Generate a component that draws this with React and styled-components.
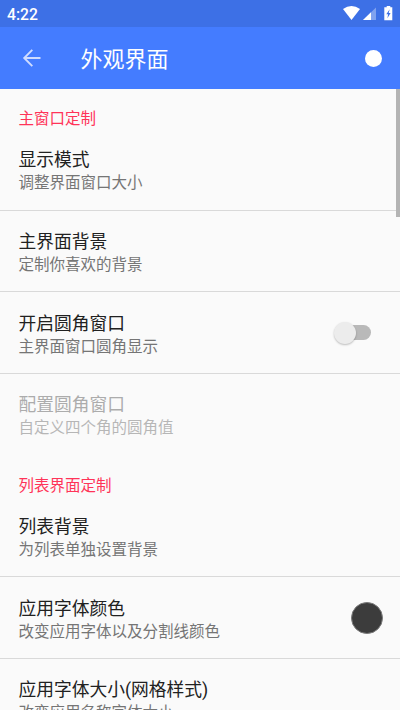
import React from "react";
import styled, { createGlobalStyle } from "styled-components";

const GlobalStyle = createGlobalStyle`
  * { box-sizing: border-box; }
  html, body { margin: 0; padding: 0; overflow: hidden; }
  body {
    background: #fafafa;
    font-family: Roboto, "Noto Sans CJK SC", sans-serif;
  }
`;

const Screen = styled.div`
  display: flex;
  flex-direction: column;
  width: 400px;
  height: 710px;
  overflow: hidden;
  background: #fafafa;
`;

const StatusBar = styled.header`
  display: flex;
  align-items: center;
  justify-content: space-between;
  flex: none;
  height: 27px;
  padding: 0 7px;
  background: #3d70e6;
  color: #fff;
`;

const Clock = styled.span`
  font-size: 15.7px;
  font-weight: 500;
  line-height: 27px;
  padding-top: 2px;
`;

const StatusIcons = styled.svg`
  display: block;
  width: 52px;
  height: 27px;
`;

const AppBar = styled.div`
  display: flex;
  align-items: center;
  flex: none;
  height: 62px;
  padding: 0 18px 0 20px;
  background: #447cff;
  color: #fff;
`;

const BackIcon = styled.svg`
  display: block;
  flex: none;
  width: 24px;
  height: 24px;
`;

const Title = styled.h1`
  flex: 1;
  margin: 0 0 0 36.5px;
  padding-top: 3px;
  font-size: 22px;
  font-weight: 400;
  line-height: 30px;
`;

const ColorDot = styled.span`
  flex: none;
  width: ${(p) => p.$size}px;
  height: ${(p) => p.$size}px;
  border-radius: 50%;
  background: ${(p) => p.$color};
  border: ${(p) => (p.$ring ? `1px solid ${p.$ring}` : "none")};
`;

const Content = styled.main`
  position: relative;
  flex: 1;
  min-height: 0;
  overflow: hidden;
`;

const ScrollThumb = styled.div`
  position: absolute;
  top: 0;
  right: 0;
  width: 4px;
  height: 128px;
  background: #b4b4b4;
`;

const SectionTitle = styled.h2`
  height: 40px;
  margin: 0;
  padding: 19px 18.5px 0;
  color: #ff3358;
  font-size: 15.5px;
  font-weight: 400;
  line-height: 23px;
`;

const Row = styled.div`
  display: flex;
  align-items: center;
  justify-content: space-between;
  height: 81.7px;
  padding: 0 17px 0 18.5px;
  border-bottom: 1px solid ${(p) => (p.$last ? "transparent" : "#d9d9d9")};
  opacity: ${(p) => (p.$disabled ? 0.5 : 1)};
`;

const Texts = styled.div`
  padding-top: 4px;
`;

const Label = styled.div`
  color: ${(p) => (p.$disabled ? "#606060" : "#212121")};
  font-size: 17.75px;
  line-height: 24px;
  white-space: nowrap;
`;

const Summary = styled.div`
  color: #757575;
  font-size: 15.5px;
  line-height: 22px;
  white-space: nowrap;
`;

const SwitchTrack = styled.span`
  display: flex;
  align-items: center;
  width: 32px;
  height: 15px;
  margin-right: 12px;
  border-radius: 8px;
  background: #b9b9b9;
`;

const SwitchThumb = styled.span`
  flex: none;
  width: 22px;
  height: 22px;
  margin-left: -5.5px;
  border-radius: 50%;
  background: #ececec;
  box-shadow: 0 1px 2px rgba(0, 0, 0, 0.25);
`;

const sections = [
  {
    title: "主窗口定制",
    items: [
      { label: "显示模式", summary: "调整界面窗口大小" },
      { label: "主界面背景", summary: "定制你喜欢的背景" },
      { label: "开启圆角窗口", summary: "主界面窗口圆角显示", control: "switch" },
      { label: "配置圆角窗口", summary: "自定义四个角的圆角值", disabled: true },
    ],
  },
  {
    title: "列表界面定制",
    items: [
      { label: "列表背景", summary: "为列表单独设置背景" },
      { label: "应用字体颜色", summary: "改变应用字体以及分割线颜色", control: "color" },
      { label: "应用字体大小(网格样式)", summary: "改变应用名称字体大小" },
    ],
  },
];

function Preference({ item, last }) {
  return (
    <Row $disabled={item.disabled} $last={last}>
      <Texts>
        <Label $disabled={item.disabled}>{item.label}</Label>
        <Summary>{item.summary}</Summary>
      </Texts>
      {item.control === "switch" && (
        <SwitchTrack>
          <SwitchThumb />
        </SwitchTrack>
      )}
      {item.control === "color" && <ColorDot $size={32} $color="#3c3c3c" $ring="#7b7b7b" />}
    </Row>
  );
}

export default function App() {
  return (
    <Screen>
      <GlobalStyle />
      <StatusBar>
        <Clock>4:22</Clock>
        <StatusIcons viewBox="0 0 52 27" fill="#fff">
          <path d="M2 9Q10.500 3 19 9L10.500 20Z" />
          <path d="M35 7.500V20H22Z" opacity="0.35" />
          <path d="M30 12.300V20H22Z" />
          <path d="M45.700 6h3.600v1.300h2V20.300h-8V7.300h2.400z" />
          <path d="M48.500 9.500l-3.200 4.800h1.800l-.7 4 3.200-5.200h-1.900l.9-3.600z" fill="#3d70e6" />
        </StatusIcons>
      </StatusBar>
      <AppBar>
        <BackIcon viewBox="0 0 24 24" fill="none" stroke="#cfdcff" strokeWidth="1.900">
          <path d="M20.500 12H4M12.300 3.900L4.200 12l8.100 8.100" />
        </BackIcon>
        <Title>外观界面</Title>
        <ColorDot $size={17} $color="#fff" />
      </AppBar>
      <Content>
        {sections.map((section) => (
          <section key={section.title}>
            <SectionTitle>{section.title}</SectionTitle>
            {section.items.map((item, i) => (
              <Preference key={item.label} item={item} last={i === section.items.length - 1} />
            ))}
          </section>
        ))}
        <ScrollThumb />
      </Content>
    </Screen>
  );
}
